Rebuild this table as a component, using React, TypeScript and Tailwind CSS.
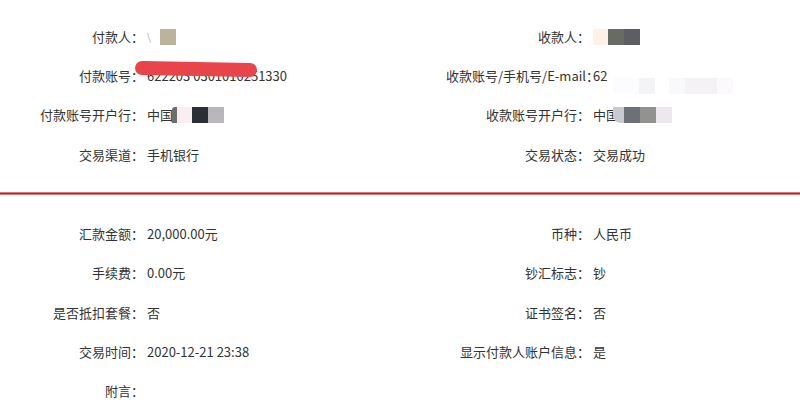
import React from "react";

type Cell = { label: string; value: React.ReactNode };

// mosaic tile used to blur out private info
const Tile = ({ className }: { className: string }) => (
  <span className={`inline-block h-[16px] shrink-0 ${className}`} />
);

const topRows: [Cell, Cell][] = [
  [
    {
      label: "付款人：",
      value: (
        <span className="flex items-center">
          <span className="text-[#aaa] text-[10px] w-[13px]">\</span>
          <Tile className="w-[16px] bg-[#bdb39b]" />
        </span>
      ),
    },
    {
      label: "收款人：",
      value: (
        <span className="flex items-center">
          <Tile className="w-[15px] bg-[#fdf1e8] rounded-l-[3px]" />
          <Tile className="w-[16px] bg-[#666b64]" />
          <Tile className="w-[16px] bg-[#5c5e63]" />
        </span>
      ),
    },
  ],
  [
    {
      label: "付款账号：",
      value: (
        <span className="relative">
          622203 0301010251330
          <span className="absolute left-[-12px] top-[-4px] h-[14px] w-[122px] rounded-[8px] bg-[#e7454a] rotate-[1deg]" />
        </span>
      ),
    },
    {
      label: "收款账号/手机号/E-mail：",
      value: (
        <span className="relative">
          62
          <span className="absolute left-[20px] top-[12px] flex">
            <Tile className="w-[26px] bg-[#fcfbfd]" />
            <Tile className="w-[16px] bg-[#f4f4f6]" />
            <Tile className="w-[14px] bg-white" />
            <Tile className="w-[16px] bg-[#f9f8fa]" />
            <Tile className="w-[32px] bg-[#f5f2f6]" />
            <Tile className="w-[16px] bg-[#fcf9fc]" />
          </span>
        </span>
      ),
    },
  ],
  [
    {
      label: "付款账号开户行：",
      value: (
        <span className="flex items-center">
          <span>中国</span>
          <Tile className="w-[5px] -ml-[1px] bg-[#6a6e6e] rounded-tl-[3px]" />
          <Tile className="w-[15px] bg-[#fbeef3]" />
          <Tile className="w-[16px] bg-[#2b2f33]" />
          <Tile className="w-[16px] bg-[#b9b7bb]" />
        </span>
      ),
    },
    {
      label: "收款账号开户行：",
      value: (
        <span className="flex items-center">
          <span>中国</span>
          <Tile className="w-[11px] -ml-[6px] bg-[#c9c9d1] rounded-bl-[8px]" />
          <Tile className="w-[16px] bg-[#6d7175]" />
          <Tile className="w-[16px] bg-[#929390]" />
          <Tile className="w-[16px] bg-[#ece8ee]" />
        </span>
      ),
    },
  ],
  [
    { label: "交易渠道：", value: "手机银行" },
    { label: "交易状态：", value: "交易成功" },
  ],
];

const bottomRows: [Cell, Cell | null][] = [
  [
    { label: "汇款金额：", value: "20,000.00元" },
    { label: "币种：", value: "人民币" },
  ],
  [
    { label: "手续费：", value: "0.00元" },
    { label: "钞汇标志：", value: "钞" },
  ],
  [
    { label: "是否抵扣套餐：", value: "否" },
    { label: "证书签名：", value: "否" },
  ],
  [
    { label: "交易时间：", value: "2020-12-21 23:38" },
    { label: "显示付款人账户信息：", value: "是" },
  ],
  [{ label: "附言：", value: "" }, null],
];

const Row = ({ left, right }: { left: Cell; right: Cell | null }) => (
  <div className="grid grid-cols-[147px_299px_147px_1fr] h-[39.3px] items-center">
    <div className="text-right whitespace-nowrap pr-[3px]">{left.label}</div>
    <div className="whitespace-nowrap">{left.value}</div>
    <div className="text-right whitespace-nowrap pr-[3px]">{right?.label}</div>
    <div className="whitespace-nowrap">{right?.value}</div>
  </div>
);

export default function App() {
  return (
    <div
      className="w-[800px] h-[411px] overflow-hidden bg-white text-[13px] text-[#333]"
      style={{ fontFamily: '"Noto Sans CJK SC", "Liberation Sans", sans-serif' }}
    >
      <div className="pt-[17px] pb-[18px]">
        {topRows.map(([l, r], i) => (
          <Row key={i} left={l} right={r} />
        ))}
      </div>
      <div className="h-[3px] bg-[#b02327] border-y border-[#d9777a]" />
      <div className="pt-[19px]">
        {bottomRows.map(([l, r], i) => (
          <Row key={i} left={l} right={r} />
        ))}
      </div>
    </div>
  );
}
